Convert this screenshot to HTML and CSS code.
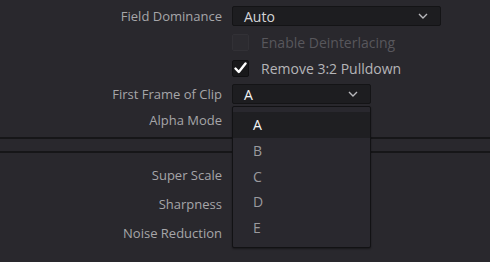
FILE: index.html
```html
<!DOCTYPE html>
<html>
<head>
<meta charset="utf-8">
<link rel="stylesheet" href="styles.css">
</head>
<body>
<div class="panel">
  <div class="section top">
    <div class="row">
      <div class="label">Field Dominance</div>
      <div class="select wide">
        <span class="value">Auto</span>
        <svg class="chev" width="10" height="6" viewBox="0 0 10 6"><path d="M1 1 L5 5 L9 1" fill="none" stroke="#b8b8bc" stroke-width="1.4"/></svg>
      </div>
    </div>
    <div class="row">
      <div class="label"></div>
      <div class="check disabled"></div>
      <span class="check-label disabled-text">Enable Deinterlacing</span>
    </div>
    <div class="row">
      <div class="label"></div>
      <div class="check checked">
        <svg width="13" height="12" viewBox="0 0 13 12"><path d="M1.5 6.5 L4.8 10 L11.5 1.5" fill="none" stroke="#ffffff" stroke-width="2.4" stroke-linecap="round" stroke-linejoin="round"/></svg>
      </div>
      <span class="check-label">Remove 3:2 Pulldown</span>
    </div>
    <div class="row">
      <div class="label">First Frame of Clip</div>
      <div class="select narrow">
        <span class="value bright">A</span>
        <svg class="chev" width="10" height="6" viewBox="0 0 10 6"><path d="M1 1 L5 5 L9 1" fill="none" stroke="#b8b8bc" stroke-width="1.4"/></svg>
        <div class="menu">
          <div class="item active">A</div>
          <div class="item">B</div>
          <div class="item">C</div>
          <div class="item">D</div>
          <div class="item">E</div>
        </div>
      </div>
    </div>
    <div class="row">
      <div class="label">Alpha Mode</div>
    </div>
  </div>
  <div class="divider"></div>
  <div class="section bottom">
    <div class="row tall"><div class="label">Super Scale</div></div>
    <div class="row tall"><div class="label">Sharpness</div></div>
    <div class="row tall"><div class="label">Noise Reduction</div></div>
  </div>
</div>
</body>
</html>
```

FILE: styles.css
```css
html, body {
  margin: 0;
  padding: 0;
  background: #29282d;
  width: 490px;
  height: 262px;
  overflow: hidden;
  font-family: "Open Sans", "Noto Sans", sans-serif;
  font-size: 13px;
}

.panel {
  display: flex;
  flex-direction: column;
}

.section.top {
  padding-top: 3px;
}

.row {
  display: flex;
  align-items: center;
  height: 26px;
}

.row.tall {
  height: 29px;
}

.label {
  width: 222px;
  flex: none;
  text-align: right;
  color: #a6a6a9;
  padding-right: 10px;
  box-sizing: content-box;
  white-space: nowrap;
}

.select {
  position: relative;
  height: 20px;
  box-sizing: border-box;
  background: #1d1d20;
  border: 1px solid #141416;
  border-radius: 2px;
  display: flex;
  align-items: center;
  padding-left: 11px;
  padding-right: 12px;
}

.select.wide {
  width: 209px;
}

.select.narrow {
  width: 139px;
}

.value {
  flex: 1;
  color: #d4d4d6;
  font-size: 14px;
}

.value.bright {
  color: #f2f2f2;
}

.chev {
  flex: none;
}

.check {
  width: 17px;
  height: 17px;
  box-sizing: border-box;
  border-radius: 2px;
  flex: none;
  display: flex;
  align-items: center;
  justify-content: center;
}

.check.disabled {
  background: #2c2b30;
  border: 1px solid #323136;
}

.check.checked {
  background: #18181a;
  border: 1px solid #101012;
}

.check-label {
  margin-left: 12px;
  color: #b5b5b8;
  font-size: 14px;
}

.check-label.disabled-text {
  color: #58575c;
}

.divider {
  margin-top: 4px;
  height: 12px;
  border-top: 2px solid #161618;
  border-bottom: 2px solid #161618;
}

.section.bottom {
  padding-top: 7px;
}

.menu {
  position: absolute;
  left: -1px;
  top: 21px;
  width: 139px;
  height: 142px;
  box-sizing: border-box;
  background: #29282e;
  border: 1px solid #121214;
  border-radius: 2px;
  padding-top: 5px;
  z-index: 5;
  box-shadow: 0 1px 2px rgba(0,0,0,0.4);
}

.item {
  height: 25.7px;
  display: flex;
  align-items: center;
  padding-left: 20px;
  color: #9a9a9e;
  font-size: 14px;
}

.item.active {
  background: #1f1f22;
  color: #f4f4f4;
}
```
